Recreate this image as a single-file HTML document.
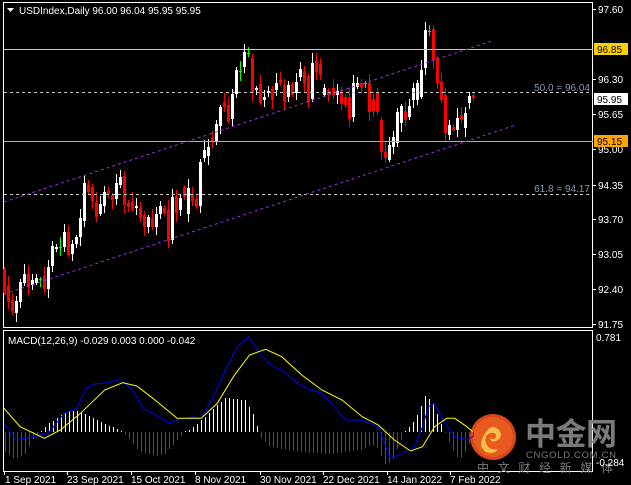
<!DOCTYPE html>
<html><head><meta charset="utf-8"><style>
html,body{margin:0;padding:0;background:#000;width:631px;height:485px;overflow:hidden}
svg{display:block}
text{font-family:"Liberation Sans","Noto Sans CJK SC",sans-serif}
.ce{shape-rendering:crispEdges}
</style></head><body>
<svg id="s" width="631" height="485" xmlns="http://www.w3.org/2000/svg">
<rect width="631" height="485" fill="#000"/>
<g class="ce">
<rect x="3.5" y="2.5" width="589" height="325" fill="none" stroke="#fff" stroke-width="1"/>
<rect x="3.5" y="330.5" width="589" height="141" fill="none" stroke="#fff" stroke-width="1"/>
</g>
<g>
<circle cx="493" cy="437" r="23" fill="#d8461c"/>
<circle cx="493" cy="437" r="20" fill="#e85a20"/>
<path d="M486 432 q6 -9 13 -2 q5 7 -3 11 q-5 2 -6 -3 q4 3 6 -1 q1 -5 -6 -4 q-6 3 -4 10 q3 8 12 6 q-4 6 -12 3 q-8 -5 -3 -15z" fill="#f6c04a"/>
<text x="525" y="445" font-size="31" font-weight="bold" fill="#7a7a7a" style="font-family:'Noto Sans CJK SC',sans-serif" textLength="92">中金网</text>
<text x="526" y="458" font-size="9.5" fill="#7a7a7a" textLength="90">CNGOLD.COM.CN</text>
<text x="477" y="472" font-size="12" fill="#7a7a7a" style="font-family:'Noto Sans CJK SC',sans-serif" textLength="136">中文财经新媒体</text>
</g>
<g id="main" class="ce"></g>
<g id="macd"></g>
<g class="ce">
<rect x="4" y="49" width="589" height="1" fill="#ffd000"/>
<rect x="4" y="141" width="589" height="1" fill="#ffa500"/>
<line x1="4" y1="92.5" x2="593" y2="92.5" stroke="#c8c8c8" stroke-dasharray="3,3"/>
<line x1="4" y1="194.5" x2="593" y2="194.5" stroke="#c8c8c8" stroke-dasharray="3,3"/>
</g>
<line x1="4" y1="202" x2="492" y2="41" stroke="#9933dd" stroke-dasharray="3,3"/>
<line x1="4" y1="294" x2="516" y2="125" stroke="#9933dd" stroke-dasharray="3,3"/>
<text x="590" y="91" font-size="10" fill="#8a98a8" text-anchor="end">50.0 = 96.04</text>
<text x="590" y="192" font-size="10" fill="#8a98a8" text-anchor="end">61.8 = 94.17</text>
<path d="M7 8 h7 l-3.5 4z" fill="#fff"/>
<text x="19" y="14" font-size="10" fill="#fff">USDIndex,Daily  96.00 96.04 95.95 95.95</text>
<text x="8" y="344" font-size="10" fill="#fff">MACD(12,26,9) -0.029 0.003 0.000 -0.042</text>
<g font-size="10" fill="#fff">
<text x="598" y="13">97.60</text>
<text x="598" y="83">96.30</text>
<text x="598" y="118">95.65</text>
<text x="598" y="153">95.00</text>
<text x="598" y="189">94.35</text>
<text x="598" y="223">93.70</text>
<text x="598" y="258">93.05</text>
<text x="598" y="293">92.40</text>
<text x="598" y="328">91.75</text>
<rect x="594" y="43" width="34" height="12" fill="#ffd000"/>
<text x="597" y="53" fill="#000">96.85</text>
<rect x="594" y="93" width="34" height="12" fill="#fff"/>
<text x="597" y="103" fill="#000">95.95</text>
<rect x="594" y="135" width="34" height="12" fill="#ffa500"/>
<text x="597" y="145" fill="#000">95.15</text>
<text x="596" y="341">0.781</text>
<text x="596" y="466">-0.284</text>
</g>
<g stroke="#fff" class="ce">
<line x1="593" y1="9.5" x2="596" y2="9.5"/><line x1="593" y1="79.5" x2="596" y2="79.5"/><line x1="593" y1="114.5" x2="596" y2="114.5"/><line x1="593" y1="149.5" x2="596" y2="149.5"/><line x1="593" y1="185.5" x2="596" y2="185.5"/><line x1="593" y1="219.5" x2="596" y2="219.5"/><line x1="593" y1="254.5" x2="596" y2="254.5"/><line x1="593" y1="289.5" x2="596" y2="289.5"/><line x1="593" y1="324.5" x2="596" y2="324.5"/>
</g>
<g font-size="10" fill="#fff">
<text x="5" y="483">1 Sep 2021</text>
<text x="67" y="483">23 Sep 2021</text>
<text x="131" y="483">15 Oct 2021</text>
<text x="195" y="483">8 Nov 2021</text>
<text x="260" y="483">30 Nov 2021</text>
<text x="323" y="483">22 Dec 2021</text>
<text x="387" y="483">14 Jan 2022</text>
<text x="450" y="483">7 Feb 2022</text>
</g>
<g stroke="#fff" class="ce"><line x1="4.5" y1="472" x2="4.5" y2="475"/><line x1="67.5" y1="472" x2="67.5" y2="475"/><line x1="131.5" y1="472" x2="131.5" y2="475"/><line x1="195.5" y1="472" x2="195.5" y2="475"/><line x1="260.5" y1="472" x2="260.5" y2="475"/><line x1="323.5" y1="472" x2="323.5" y2="475"/><line x1="387.5" y1="472" x2="387.5" y2="475"/><line x1="450.5" y1="472" x2="450.5" y2="475"/></g>
</svg>
<script>
var C=[[4,269,293,'r'],[8,285,302,'r'],[12,300,311,'r'],[16,301,313,'w'],[20,282,302,'w'],[24,274,283,'w'],[28,274,287,'r'],[32,280,285,'w'],[36,278,283,'w'],[40,279,280,'g'],[44,276,289,'r'],[48,267,289,'w'],[52,246,266,'w'],[56,247,249,'w'],[60,247,248,'g'],[64,232,247,'w'],[68,232,255,'r'],[72,244,254,'w'],[76,237,244,'w'],[80,218,237,'w'],[84,183,221,'w'],[88,185,192,'r'],[92,187,201,'r'],[96,202,217,'r'],[100,204,214,'w'],[104,192,206,'w'],[108,191,194,'r'],[112,195,200,'r'],[116,183,199,'w'],[120,177,185,'w'],[124,176,205,'r'],[128,203,207,'r'],[132,202,210,'r'],[136,206,208,'w'],[140,208,218,'r'],[144,215,227,'r'],[148,217,227,'w'],[152,218,227,'r'],[156,214,227,'w'],[160,206,214,'w'],[164,208,213,'r'],[168,210,241,'r'],[172,197,240,'w'],[176,196,213,'r'],[180,198,210,'w'],[184,187,197,'r'],[188,188,214,'w'],[192,194,201,'r'],[196,199,207,'r'],[200,162,206,'w'],[204,150,158,'w'],[208,147,156,'w'],[212,137,142,'r'],[216,124,142,'w'],[220,107,126,'w'],[224,102,107,'r'],[228,105,122,'r'],[232,94,119,'w'],[236,70,94,'w'],[240,71,72,'g'],[244,52,67,'w'],[248,53,54,'g'],[252,58,93,'r'],[256,88,90,'w'],[260,84,103,'r'],[264,97,100,'w'],[268,91,93,'w'],[272,89,100,'r'],[276,83,90,'w'],[280,80,83,'r'],[284,85,102,'r'],[288,85,97,'w'],[292,84,95,'r'],[296,82,93,'w'],[300,69,77,'w'],[304,71,83,'r'],[308,76,102,'r'],[312,63,99,'w'],[316,61,72,'r'],[320,64,75,'r'],[324,88,95,'w'],[328,90,95,'r'],[333,88,95,'r'],[337,91,95,'w'],[341,92,104,'r'],[345,97,105,'r'],[349,97,119,'r'],[353,83,117,'w'],[357,83,87,'w'],[361,83,87,'r'],[365,83,84,'g'],[369,83,112,'r'],[373,99,111,'r'],[377,93,112,'r'],[381,120,152,'r'],[385,152,158,'r'],[389,145,160,'w'],[393,137,147,'w'],[397,112,143,'w'],[401,106,123,'w'],[405,111,120,'r'],[409,106,117,'w'],[413,88,100,'w'],[417,83,100,'w'],[421,70,97,'w'],[425,30,68,'w'],[429,31,32,'g'],[433,29,60,'r'],[437,58,83,'r'],[441,82,100,'r'],[445,95,133,'r'],[449,125,135,'w'],[453,127,130,'r'],[457,118,130,'w'],[461,115,120,'r'],[465,113,128,'w'],[469,96,103,'w'],[473,95,98,'r']];
var NS='http://www.w3.org/2000/svg',m=document.getElementById('main');
function el(t,a,p){var e=document.createElementNS(NS,t);for(var k in a)e.setAttribute(k,a[k]);p.appendChild(e);return e;}
C.forEach(function(c,i){var col=c[3]=='r'?'#ff0000':c[3]=='g'?'#00ff00':'#ffffff';
 var wt=2+((i*7)%9),wb=2+((i*5)%8);
 el('rect',{x:c[0],y:c[1]-wt,width:1,height:c[2]-c[1]+wt+wb,fill:col},m);
 if(c[3]=='g'){el('rect',{x:c[0]-1,y:c[1],width:3,height:1,fill:col},m);}
 else el('rect',{x:c[0]-1,y:c[1],width:3,height:Math.max(1,c[2]-c[1]),fill:col},m);
});
var g=document.getElementById('macd');
var hg=el('g',{'shape-rendering':'crispEdges'},g);
function pts(a){return a.map(function(p){return (p[0]/2.485).toFixed(1)+','+(p[1]/3+320).toFixed(1)}).join(' ');}
var H=[[5,-20],[15,-27],[25,-22],[32,-8],[40,0],[48,8],[60,16],[70,22],[80,20],[90,16],[100,10],[120,2],[126,-4],[140,-20],[155,-24],[165,-22],[177,-8],[185,0],[195,6],[210,20],[225,34],[245,32],[255,14],[260,-5],[270,-15],[300,-20],[330,-22],[360,-18],[375,-12],[385,-32],[392,-30],[400,-10],[406,2],[415,12],[425,36],[432,30],[440,10],[447,-5],[455,-24],[462,-26],[470,-10],[473,-5]];
function hv(x){for(var i=0;i<H.length-1;i++){if(x>=H[i][0]&&x<=H[i+1][0]){var t=(x-H[i][0])/(H[i+1][0]-H[i][0]);return H[i][1]+t*(H[i+1][1]-H[i][1]);}}return 0;}
for(var x=5;x<=473;x+=4){var v=Math.round(hv(x));if(v==0)v=1;
 el('rect',{x:x,y:v>0?432-v:432,width:1,height:Math.abs(v),fill:v>0?'#ffffff':'#ff0000'},hg);}
el('polyline',{points:pts([[10,310],[40,360],[80,350],[120,340],[160,280],[190,265],[215,205],[235,192],[265,188],[300,178],[330,210],[355,265],[380,280],[420,310],[440,300],[480,290],[500,295],[530,230],[560,150],[590,80],[618,50],[650,110],[680,140],[700,150],[740,190],[770,210],[800,220],[830,260],[860,300],[900,300],[940,320],[970,415],[1000,400],[1030,380],[1050,320],[1065,260],[1080,250],[1100,300],[1130,350],[1160,360],[1175,350]]),fill:'none',stroke:'#0000ff','stroke-width':1},g);
el('polyline',{points:pts([[10,265],[50,320],[110,355],[150,330],[200,280],[260,210],[305,188],[340,198],[380,235],[440,295],[500,295],[540,250],[580,170],[620,105],[660,88],[700,110],[750,165],[800,210],[850,240],[900,290],[940,315],[980,360],[1020,393],[1050,380],[1080,320],[1110,295],[1130,295],[1160,320],[1175,335]]),fill:'none',stroke:'#ffff00','stroke-width':1},g);
</script>
</body></html>
